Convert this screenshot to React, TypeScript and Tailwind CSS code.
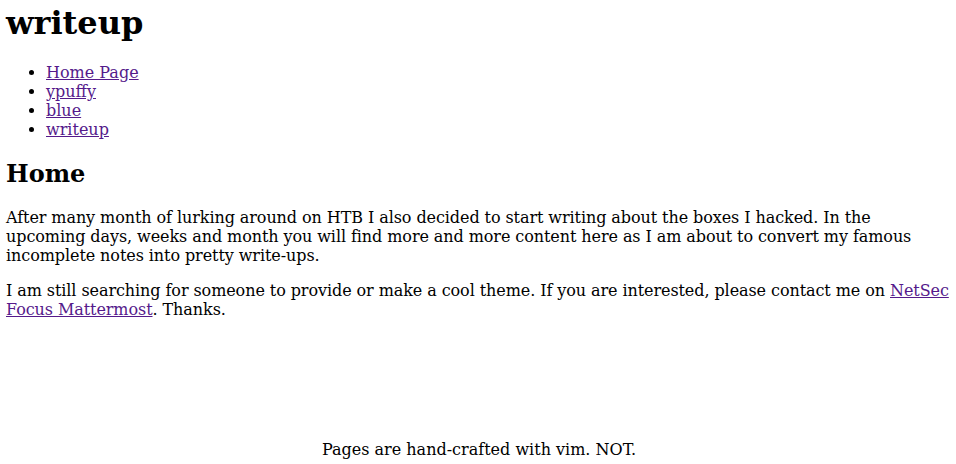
const App = () => {
  const links = ["Home Page", "ypuffy", "blue", "writeup"];

  return (
    <div className="min-h-screen flex flex-col bg-white text-black pl-[6px] pr-[4px] pt-[3.5px] pb-[4.6px] font-['DejaVu_Serif',serif] text-[16px] leading-[normal]">
      <main>
        <h1 className="text-[32px] font-bold leading-[normal] mb-[21.44px]">writeup</h1>
        <ul className="list-disc pl-[40px] mb-[16px]">
          {links.map((l) => (
            <li key={l}>
              <a href="#" className="text-[#551a8b] underline">
                {l}
              </a>
            </li>
          ))}
        </ul>
        <h2 className="text-[24px] font-bold leading-[normal] mt-[19.92px] mb-[19.92px]">Home</h2>
        <div className="tracking-[-0.08px]">
          <p className="mb-[16px]">
            After many month of lurking around on HTB I also decided to start writing about the boxes I hacked. In the
            upcoming days, weeks and month you will find more and more content here as I am about to convert my famous
            incomplete notes into pretty write-ups.
          </p>
          <p>
            I am still searching for someone to provide or make a cool theme. If you are interested, please contact me
            on{" "}
            <a href="#" className="text-[#551a8b] underline">
              NetSec Focus Mattermost
            </a>
            . Thanks.
          </p>
        </div>
      </main>
      <footer className="mt-auto text-center">Pages are hand-crafted with vim. NOT.</footer>
    </div>
  );
};

export default App;
